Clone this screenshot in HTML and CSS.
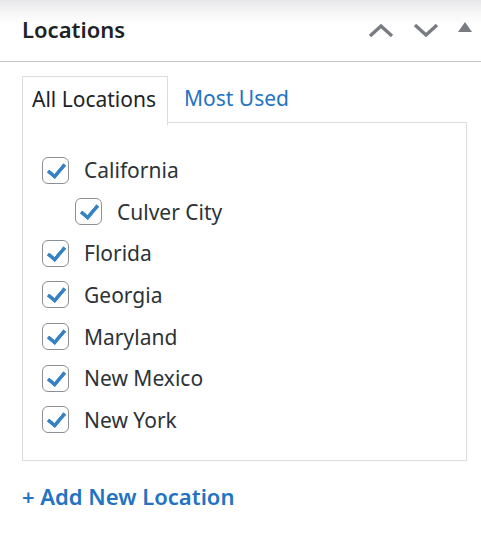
FILE: index.html
```html
<!DOCTYPE html>
<html lang="en">
  <head>
    <meta charset="UTF-8" />
    <meta name="viewport" content="width=device-width, initial-scale=1.0" />
    <title>Locations</title>
    <link rel="stylesheet" href="styles.css">
  </head>
  <body>
    <div class="postbox">
      <div class="postbox-header">
        <h2>Locations</h2>
        <div class="handle-actions">
          <button class="handle-btn" aria-label="Move up">
            <svg width="26" height="16" viewBox="0 0 26 16"><path d="M2 14 L13 4 L24 14" fill="none" stroke="#787c82" stroke-width="3.4"/></svg>
          </button>
          <button class="handle-btn" aria-label="Move down">
            <svg width="26" height="16" viewBox="0 0 26 16"><path d="M2 3 L13 13 L24 3" fill="none" stroke="#787c82" stroke-width="3.4"/></svg>
          </button>
          <button class="handle-btn toggle" aria-label="Toggle panel">
            <svg width="14" height="12" viewBox="0 0 14 12"><path d="M0 11 L7 1 L14 11 Z" fill="#787c82"/></svg>
          </button>
        </div>
      </div>

      <div class="inside">
        <ul class="tabs">
          <li class="tab active">All Locations</li>
          <li class="tab"><a href="#">Most Used</a></li>
        </ul>
        <div class="tabs-panel">
          <ul class="checklist">
            <li><label><span class="check"></span>California</label>
              <ul class="children">
                <li><label><span class="check"></span>Culver City</label></li>
              </ul>
            </li>
            <li><label><span class="check"></span>Florida</label></li>
            <li><label><span class="check"></span>Georgia</label></li>
            <li><label><span class="check"></span>Maryland</label></li>
            <li><label><span class="check"></span>New Mexico</label></li>
            <li><label><span class="check"></span>New York</label></li>
          </ul>
        </div>
        <a class="add-new" href="#">+ Add New Location</a>
      </div>
    </div>
  </body>
</html>
```

FILE: styles.css
```css
* {
  margin: 0;
  padding: 0;
  box-sizing: border-box;
}
body {
  font-family: "Noto Sans", "Open Sans", sans-serif;
  background: #fff;
  color: #2c3338;
  width: 481px;
  height: 547px;
  overflow: hidden;
}
.postbox-header {
  display: flex;
  align-items: center;
  justify-content: space-between;
  height: 62px;
  padding-left: 22px;
  border-bottom: 1.6px solid #c3c4c7;
  background: linear-gradient(to bottom, #e6e6e8 0px, #f6f6f7 12px, #fff 26px);
}
.postbox-header h2 {
  font-size: 22px;
  font-weight: 600;
  color: #1d2327;
  line-height: 1;
  margin-top: -3px;
}
.handle-actions {
  display: flex;
  align-items: center;
  gap: 19px;
  padding-right: 9px;
  margin-top: -2px;
}
.handle-btn {
  background: none;
  border: none;
  display: flex;
  align-items: center;
  cursor: pointer;
}
.handle-btn.toggle {
  margin-top: -6px;
}
.inside {
  padding: 14px 14px 0 22px;
}
.tabs {
  list-style: none;
  display: flex;
  height: 48px;
}
.tab {
  padding: 9px 9px 0 9px;
  font-size: 21px;
  line-height: 1.3;
  white-space: nowrap;
}
.tab.active {
  border: 1.6px solid #dcdcde;
  border-bottom: none;
  background: #fff;
  color: #1d2327;
  position: relative;
  z-index: 1;
  height: 49px;
  width: 146px;
}
.tab a {
  color: #2273c2;
  text-decoration: none;
  padding-left: 7px;
}
.tabs-panel {
  border: 1.6px solid #dcdcde;
  margin-top: -1.6px;
  height: 339px;
  padding: 26px 20px 0 19px;
}
.checklist, .children {
  list-style: none;
}
.children {
  padding-left: 33px;
}
.checklist label {
  display: flex;
  align-items: center;
  gap: 15px;
  height: 41.6px;
  font-size: 21px;
  color: #2c3338;
}
.check {
  width: 27px;
  height: 27px;
  border: 1.6px solid #8c8f94;
  border-radius: 6px;
  flex-shrink: 0;
  position: relative;
}
.check::after {
  content: "";
  position: absolute;
  left: 8px;
  top: 2px;
  width: 7px;
  height: 14px;
  border-right: 4px solid #3582c4;
  border-bottom: 4px solid #3582c4;
  transform: rotate(40deg);
  border-radius: 1px;
}
.add-new {
  display: inline-block;
  margin-top: 20px;
  font-size: 22px;
  font-weight: 600;
  color: #2273c2;
  text-decoration: none;
}
```
